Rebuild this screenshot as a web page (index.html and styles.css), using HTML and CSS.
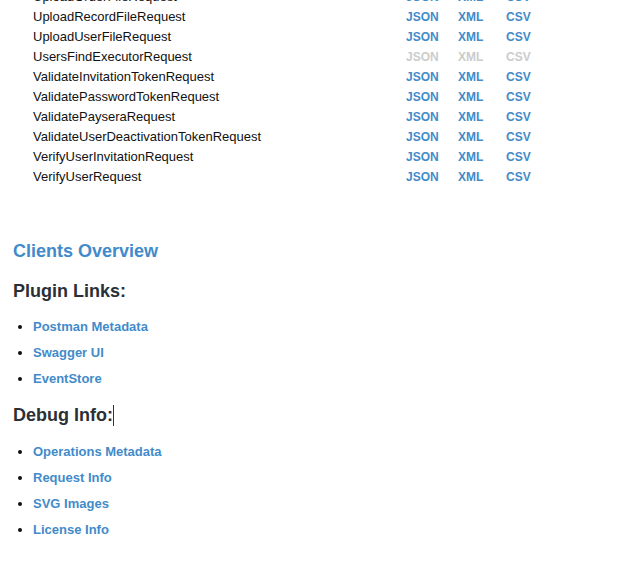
FILE: index.html
```html
<!DOCTYPE html>
<html>
<head>
<meta charset="utf-8">
<link rel="stylesheet" href="styles.css">
</head>
<body>
<div class="page">
  <table class="ops">
    <tbody>
      <tr><td class="name">UploadOrderFileRequest</td><td class="fmt"><a>JSON</a></td><td class="fmt"><a>XML</a></td><td class="fmt"><a>CSV</a></td></tr>
      <tr><td class="name">UploadRecordFileRequest</td><td class="fmt"><a>JSON</a></td><td class="fmt"><a>XML</a></td><td class="fmt"><a>CSV</a></td></tr>
      <tr><td class="name">UploadUserFileRequest</td><td class="fmt"><a>JSON</a></td><td class="fmt"><a>XML</a></td><td class="fmt"><a>CSV</a></td></tr>
      <tr class="off"><td class="name">UsersFindExecutorRequest</td><td class="fmt"><a>JSON</a></td><td class="fmt"><a>XML</a></td><td class="fmt"><a>CSV</a></td></tr>
      <tr><td class="name">ValidateInvitationTokenRequest</td><td class="fmt"><a>JSON</a></td><td class="fmt"><a>XML</a></td><td class="fmt"><a>CSV</a></td></tr>
      <tr><td class="name">ValidatePasswordTokenRequest</td><td class="fmt"><a>JSON</a></td><td class="fmt"><a>XML</a></td><td class="fmt"><a>CSV</a></td></tr>
      <tr><td class="name">ValidatePayseraRequest</td><td class="fmt"><a>JSON</a></td><td class="fmt"><a>XML</a></td><td class="fmt"><a>CSV</a></td></tr>
      <tr><td class="name">ValidateUserDeactivationTokenRequest</td><td class="fmt"><a>JSON</a></td><td class="fmt"><a>XML</a></td><td class="fmt"><a>CSV</a></td></tr>
      <tr><td class="name">VerifyUserInvitationRequest</td><td class="fmt"><a>JSON</a></td><td class="fmt"><a>XML</a></td><td class="fmt"><a>CSV</a></td></tr>
      <tr><td class="name">VerifyUserRequest</td><td class="fmt"><a>JSON</a></td><td class="fmt"><a>XML</a></td><td class="fmt"><a>CSV</a></td></tr>
    </tbody>
  </table>

  <h3 class="overview"><a>Clients Overview</a></h3>

  <h3 class="section">Plugin Links:</h3>
  <ul class="links">
    <li><a>Postman Metadata</a></li>
    <li><a>Swagger UI</a></li>
    <li><a>EventStore</a></li>
  </ul>

  <h3 class="section debug">Debug Info:<span class="caret"></span></h3>
  <ul class="links">
    <li><a>Operations Metadata</a></li>
    <li><a>Request Info</a></li>
    <li><a>SVG Images</a></li>
    <li><a>License Info</a></li>
  </ul>
</div>
</body>
</html>
```

FILE: styles.css
```css
html, body {
  margin: 0;
  padding: 0;
  background: #fff;
}

body {
  font-family: "Liberation Sans", Arial, Helvetica, sans-serif;
  font-size: 13px;
  color: #111;
  overflow: hidden;
}

.page {
  padding: 0 13px;
}

a {
  color: #428bca;
  text-decoration: none;
  font-weight: bold;
}

.ops {
  border-collapse: collapse;
  margin: -13px 0 0 20px;
}

.ops td {
  padding: 0;
  height: 20px;
  line-height: 20px;
  white-space: nowrap;
}

.ops .name {
  width: 373px;
}

.ops .fmt {
  font-size: 12px;
}

.ops .fmt:nth-child(2) { width: 52px; }
.ops .fmt:nth-child(3) { width: 48px; }

.ops tr.off a {
  color: #ccc;
}

h3 {
  font-size: 18px;
  line-height: 20px;
  font-weight: bold;
  margin: 0;
}

.overview {
  margin-top: 54px;
}

.section {
  color: #2b2f36;
  margin-top: 20px;
}

.section.debug {
  margin-top: 13px;
}

.links {
  margin: 13px 0 0;
  padding-left: 20px;
}

.links li {
  line-height: 26px;
}

.caret {
  display: inline-block;
  width: 1px;
  height: 21px;
  background: #333;
  vertical-align: -5px;
}
```
